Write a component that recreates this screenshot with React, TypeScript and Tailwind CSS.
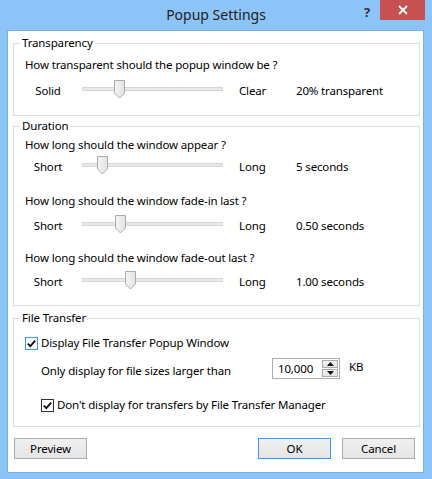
import React from "react";

function Thumb({ left }: { left: number }) {
  return (
    <svg
      className="absolute top-[-1px]"
      style={{ left }}
      width="11"
      height="19"
      viewBox="0 0 11 19"
    >
      <defs>
        <linearGradient id="thumbg" x1="0" y1="0" x2="1" y2="0">
          <stop offset="0" stopColor="#f4f4f4" />
          <stop offset="1" stopColor="#e2e2e2" />
        </linearGradient>
      </defs>
      <path d="M0.5 0.5 H10.5 V13 L5.5 18 L0.5 13 Z" fill="url(#thumbg)" stroke="#acacac" />
    </svg>
  );
}

function SliderRow({ left, right, value, thumb }: { left: string; right: string; value: string; thumb: number }) {
  return (
    <div className="flex h-[20px] items-start">
      <div className="w-[46px] text-center leading-[20px]">{left}</div>
      <div className="relative ml-[11px] h-[20px] w-[141px]">
        <div className="mt-[6px] h-[4px] w-full border border-[#d6d6d6] bg-[#e7eaea]" />
        <Thumb left={thumb} />
      </div>
      <div className="ml-[16px] w-[57px] leading-[20px]">{right}</div>
      <div className="leading-[20px]">{value}</div>
    </div>
  );
}

function Check({ blue }: { blue?: boolean }) {
  return (
    <div
      className={
        "flex h-[13px] w-[13px] shrink-0 items-center justify-center border bg-white " +
        (blue ? "border-[#3399ff]" : "border-[#333333]")
      }
    >
      <svg width="11" height="11" viewBox="0 0 11 11">
        <path d="M1.8 5.6 L4.3 8.1 L9.2 2.6" fill="none" stroke="#111" strokeWidth="1.9" />
      </svg>
    </div>
  );
}

function Group({ title, className, children }: { title: string; className?: string; children: React.ReactNode }) {
  return (
    <fieldset className={"ml-[5px] mr-[3px] border border-[#dcdcdc] p-0 " + (className ?? "")}>
      <legend className="ml-[6px] px-[2px] leading-[16px]">{title}</legend>
      {children}
    </fieldset>
  );
}

function Button({ label, focused }: { label: string; focused?: boolean }) {
  return (
    <div
      className={
        "flex h-[21px] w-[73px] items-center justify-center border bg-linear-to-b from-[#f0f0f0] to-[#e5e5e5] leading-[16px] " +
        (focused ? "border-[#3399ff]" : "border-[#acacac]")
      }
    >
      {label}
    </div>
  );
}

export default function App() {
  return (
    <div className="flex h-[479px] w-[432px] select-none flex-col overflow-hidden bg-[#8cc4f7] font-['Noto_Sans','Open_Sans',sans-serif] text-[11.5px] tracking-[-0.15px] text-black">
      {/* Title bar */}
      <div className="flex h-[30px] shrink-0">
        <div className="flex-1" />
        <div className="pt-[4px] text-[14px] leading-[22px] tracking-normal text-[#222]">Popup Settings</div>
        <div className="flex flex-1 items-start justify-end">
          <div className="mr-[10px] mt-[3px] text-[13px] font-bold leading-[18px] text-[#333]">?</div>
          <div className="mr-[7px] flex h-[20px] w-[45px] items-center justify-center bg-[#c75050]">
            <svg width="10" height="10" viewBox="0 0 10 10">
              <path d="M1 1 L9 9 M9 1 L1 9" stroke="#fff" strokeWidth="1.8" />
            </svg>
          </div>
        </div>
      </div>

      {/* Client */}
      <div className="mb-[6px] ml-[7px] mr-[8px] flex flex-1 flex-col border border-[#79b1e6] bg-white">
        <Group title="Transparency" className="mt-[4px]">
          <div className="pb-[14px] pl-[11px]">
            <div className="mt-[6px] leading-[16px]">How transparent should the popup window be ?</div>
            <div className="mt-[8px]">
              <SliderRow left="Solid" right="Clear" value="20% transparent" thumb={32} />
            </div>
          </div>
        </Group>

        <Group title="Duration" className="mt-[2px]">
          <div className="pb-[13px] pl-[11px]">
            <div className="mt-[3px] leading-[16px]">How long should the window appear ?</div>
            <div className="mt-[4px]">
              <SliderRow left="Short" right="Long" value="5 seconds" thumb={15} />
            </div>
            <div className="mt-[16px] leading-[16px]">How long should the window fade-in last ?</div>
            <div className="mt-[7px]">
              <SliderRow left="Short" right="Long" value="0.50 seconds" thumb={33} />
            </div>
            <div className="mt-[14px] leading-[16px]">How long should the window fade-out last ?</div>
            <div className="mt-[6px]">
              <SliderRow left="Short" right="Long" value="1.00 seconds" thumb={43} />
            </div>
          </div>
        </Group>

        <Group title="File Transfer" className="mt-[4px]">
          <div className="pb-[13px] pl-[11px]">
            <div className="mt-[9px] flex h-[16px] items-center">
              <Check blue />
              <div className="ml-[3px] leading-[16px]">Display File Transfer Popup Window</div>
            </div>
            <div className="mt-[7px] flex h-[21px] items-start pl-[16px]">
              <div className="mt-[5px] w-[231px] leading-[16px]">Only display for file sizes larger than</div>
              <div className="flex h-[21px] w-[68px] border border-[#abadb3] bg-white">
                <div className="flex-1 pl-[5px] leading-[19px]">10,000</div>
                <div className="flex w-[17px] flex-col gap-[1px] py-[1px] pr-[1px]">
                  <div className="flex h-[8px] items-center justify-center border border-[#acacac] bg-linear-to-b from-[#f2f2f2] to-[#e4e4e4]">
                    <svg width="7" height="4" viewBox="0 0 7 4">
                      <path d="M0 4 L3.5 0 L7 4 Z" fill="#111" />
                    </svg>
                  </div>
                  <div className="flex h-[8px] items-center justify-center border border-[#acacac] bg-linear-to-b from-[#f2f2f2] to-[#e4e4e4]">
                    <svg width="7" height="4" viewBox="0 0 7 4">
                      <path d="M0 0 L3.5 4 L7 0 Z" fill="#111" />
                    </svg>
                  </div>
                </div>
              </div>
              <div className="ml-[9px] mt-[1px] leading-[16px]">KB</div>
            </div>
            <div className="mt-[18px] flex h-[16px] items-center pl-[16px]">
              <Check />
              <div className="ml-[3px] leading-[16px]">Don't display for transfers by File Transfer Manager</div>
            </div>
          </div>
        </Group>

        <div className="ml-[6px] mr-[8px] mt-[11px] flex">
          <Button label="Preview" />
          <div className="flex-1" />
          <Button label="OK" focused />
          <div className="ml-[11px]">
            <Button label="Cancel" />
          </div>
        </div>
      </div>
    </div>
  );
}
